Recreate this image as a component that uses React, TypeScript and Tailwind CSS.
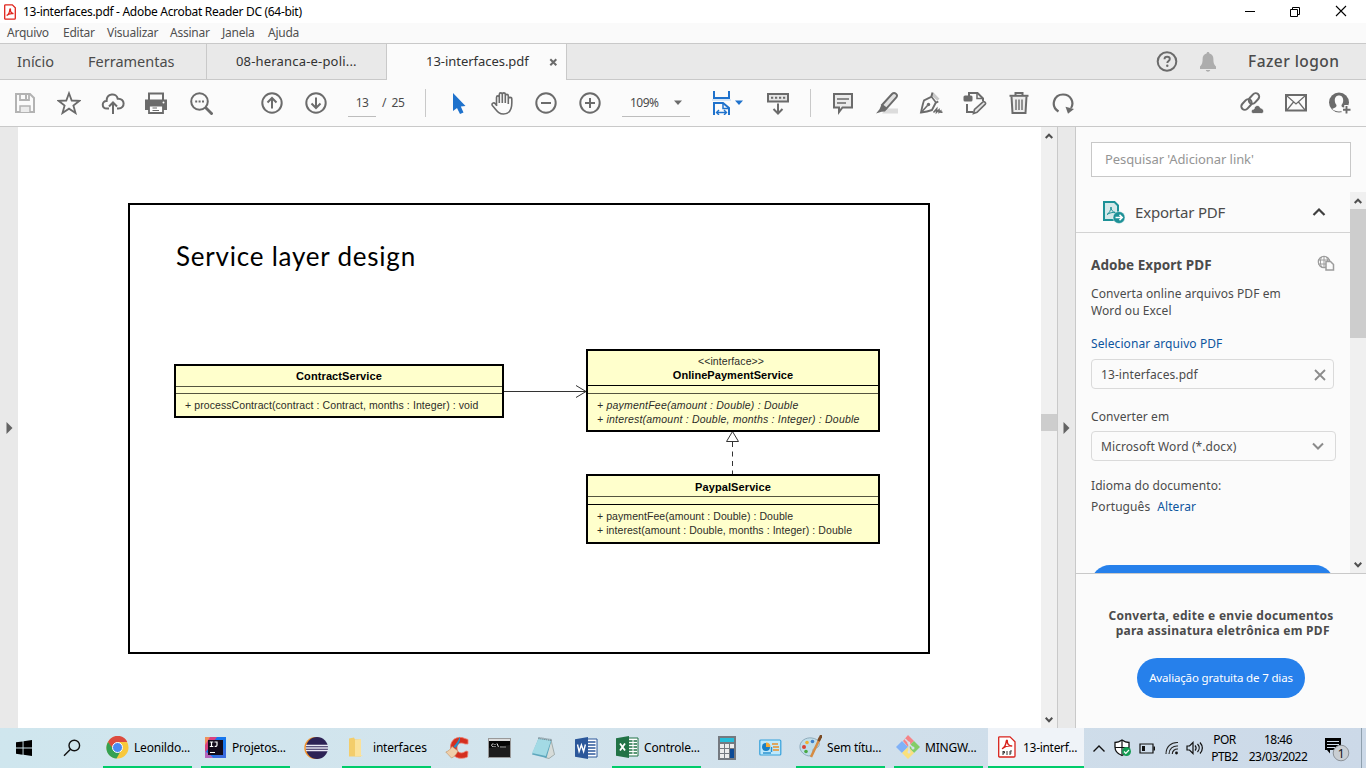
import React from "react";

type IconProps = { children: React.ReactNode; className?: string; size?: number; w?: number; h?: number };

function Icon({ children, className = "", size = 24, w, h }: IconProps) {
  const width = w ?? size;
  const height = h ?? size;
  return (
    <svg
      width={width}
      height={height}
      viewBox={`0 0 ${width} ${height}`}
      fill="none"
      stroke="#6b6b6b"
      strokeWidth="2"
      className={`block shrink-0 ${className}`}
    >
      {children}
    </svg>
  );
}

function TitleBar() {
  return (
    <div className="flex h-[23px] items-center bg-white pl-1 text-black">
      <Icon w={12} h={16}>
        <path d="M1.500.8h6.800l3 3v10.400a1 1 0 0 1-1 1H1.500a.8.8 0 0 1-.8-.8V1.600a.8.8 0 0 1 .8-.8z" stroke="#e0241c" strokeWidth="1.300" fill="#fff" />
        <path d="M2.700 11.500c1.500-.8 2.900-3.600 3.100-6 .1-1 .8-.9.7 0-.3 2.200 1 3.700 3 4.200-2.200-.3-5.300.2-6.800 1.800z" stroke="#e0241c" strokeWidth="1.200" />
      </Icon>
      <span className="ml-[7px] text-[12px] tracking-[-0.300px] whitespace-nowrap">13-interfaces.pdf - Adobe Acrobat Reader DC (64-bit)</span>
      <div className="ml-auto flex items-center">
        <Icon w={12} h={12} className="mr-[33px]"><path d="M1 5.500h10" stroke="#000" strokeWidth="1" /></Icon>
        <Icon w={12} h={12} className="mr-[34px]"><path d="M1.500 3.500h7v7h-7zM3.500 3.500v-2h7v7h-2" stroke="#000" strokeWidth="1" /></Icon>
        <Icon w={12} h={12} className="mr-[19px] mb-[2px]"><path d="M1 1l10 10M11 1L1 11" stroke="#000" strokeWidth="1.100" /></Icon>
      </div>
    </div>
  );
}

function MenuBar() {
  return (
    <div className="flex h-[21px] border-b border-[#c9c9c9] bg-[#fafafa] pl-[7px] text-[12px] leading-[20px] tracking-[-0.250px] text-[#505050]">
      <span className="w-[56px]">Arquivo</span>
      <span className="w-[44px]">Editar</span>
      <span className="w-[63px]">Visualizar</span>
      <span className="w-[52px]">Assinar</span>
      <span className="w-[46px]">Janela</span>
      <span>Ajuda</span>
    </div>
  );
}

function TabBar() {
  return (
    <div className="flex h-[36px] bg-[#e9e9e9] text-[#4b4b4b]">
      <div className="flex w-[207px] items-center border-r border-b border-[#c9c9c9] pl-[17px] text-[14.500px]">
        <span className="w-[71px]">Início</span>
        <span>Ferramentas</span>
      </div>
      <div className="flex w-[180px] items-center border-r border-b border-[#c9c9c9] pl-[29px] text-[13px] tracking-[0.180px] text-[#323232]">08-heranca-e-poli...</div>
      <div className="flex w-[180px] items-center border-r border-[#c9c9c9] bg-[#fbfbfb] pl-[39px] text-[13px] text-[#323232]">
        <span className="w-[123px] tracking-[-0.040px]">13-interfaces.pdf</span>
        <Icon w={9} h={9}><path d="M1.300 1.300l6 6M7.300 1.300l-6 6" strokeWidth="2" /></Icon>
      </div>
      <div className="flex flex-1 items-center border-b border-[#c9c9c9]">
        <div className="ml-auto flex items-center">
          <Icon size={22}>
            <circle cx="11" cy="10.500" r="9.300" />
            <path d="M8.500 8.200c0-3.300 5.300-3.100 5.300-.2 0 2-2.500 2-2.500 4" strokeWidth="1.900" />
            <circle cx="11.300" cy="14.800" r="1.200" fill="#6b6b6b" stroke="none" />
          </Icon>
          <Icon w={18} h={22} className="ml-[21px]">
            <path d="M9 1c.9 0 1.400.6 1.400 1.500 2.800.7 4 2.700 4 5.500 0 4 .6 5.500 2.600 7.500V18H1v-2.500C3 13.500 3.600 12 3.600 8c0-2.800 1.200-4.800 4-5.500C7.600 1.600 8.100 1 9 1zM6.800 19h4.400c-.5 2.300-3.900 2.300-4.400 0z" fill="#adadad" stroke="none" />
          </Icon>
          <span className="ml-[31px] w-[118px] text-[15.500px] font-medium tracking-[0.450px] whitespace-nowrap text-[#4b4b4b]">Fazer logon</span>
        </div>
      </div>
    </div>
  );
}

function Toolbar() {
  return (
    <div className="flex h-[47px] items-center border-b border-[#c9c9c9] bg-[#fbfbfb] pl-[13px] text-[12px] text-[#4b4b4b]">
      <div className="flex gap-5">
        <Icon>
          <path d="M3 3h14l4 4v14H3z" stroke="#b3b3b3" />
          <path d="M7 3v6h9V3" stroke="#b3b3b3" strokeWidth="1.800" />
          <path d="M12 4h2v4h-2z" fill="#b3b3b3" stroke="none" />
          <path d="M7 21v-6h10v6" stroke="#b3b3b3" strokeWidth="1.500" fill="#ececec" />
        </Icon>
        <Icon><path d="M12 2.300l2.700 7.200 7.700.3-6 4.800 2.100 7.400-6.500-4.300L5.500 22l2.100-7.400-6-4.800 7.700-.3z" strokeWidth="1.800" /></Icon>
        <Icon>
          <path d="M8 17.500H6C.3 17.500.5 9.800 5.600 10 5.600 2 15.600 1.700 16.700 7.700c7.700-.7 7.800 9.800.8 9.800H16" />
          <path d="M12 23V12M8 15.500l4-4 4 4" />
        </Icon>
        <Icon className="-ml-px mr-px">
          <path d="M5 9V2.500h14V9" />
          <path d="M1 8.500h22V19h-4v-4H5v4H1z" fill="#6b6b6b" stroke="none" />
          <path d="M5 14.500h14V22H5z" fill="#fff" strokeWidth="1.800" />
          <path d="M8.500 17h4.500M8.500 19.500H15" strokeWidth="1.200" />
          <circle cx="19.500" cy="11.500" r="1" fill="#fff" stroke="none" />
        </Icon>
        <Icon>
          <circle cx="10.500" cy="10.500" r="8.300" />
          <path d="M16.500 16.500l7 7" strokeWidth="2.800" />
          <path d="M6.200 10.500h2M9.600 10.500h2M13 10.500h2" strokeWidth="1.900" />
        </Icon>
      </div>
      <div className="ml-[47px] flex gap-5">
        <Icon><circle cx="12" cy="12" r="9.700" /><path d="M12 17.500V7M7.500 11.500L12 7l4.500 4.500" /></Icon>
        <Icon><circle cx="12" cy="12" r="9.700" /><path d="M12 6.500V17M7.500 12.500L12 17l4.500-4.500" /></Icon>
      </div>
      <div className="ml-5 flex h-[28px] w-[28px] items-center justify-center border-b border-[#bdbdbd] tracking-[-0.500px]">13</div>
      <span className="ml-[6px] w-[43px] tracking-[-0.400px] whitespace-pre">/  25</span>
      <div className="h-[28px] w-px bg-[#c9c9c9]" />
      <div className="ml-5 flex gap-5">
        <Icon><path d="M7 2v18l4-3 3 6 3.500-1.500-2.700-6L19.500 15z" fill="#1f72cc" stroke="none" /></Icon>
        <Icon>
          <path d="M6.500 15V6.500c0-2.200 2.800-2.200 2.800 0V12M9.300 6.500v-3c0-2.200 3-2.200 3 0V12M12.300 3.500c0-2.200 3-2.200 3 0V12M15.300 5c0-2.200 3-2.200 3 0v8M18.300 8c0-2.200 3.500-2.200 3.500 0 0 4 .4 6-.8 9.500-1.300 4-4 5.500-7.500 5.500-5.500 0-6.500-3.500-11.200-8.500-1-2.300 1.500-3.500 3-1.700l1.700 2" strokeWidth="1.600" />
        </Icon>
        <Icon><circle cx="12" cy="12" r="9.700" /><path d="M7 12h10" /></Icon>
        <Icon><circle cx="12" cy="12" r="9.700" /><path d="M7 12h10M12 7v10" /></Icon>
      </div>
      <div className="ml-5 flex h-[28px] w-[68px] items-center border-b border-[#bdbdbd] pl-2">
        <span className="w-[43px] tracking-[-0.500px]">109%</span>
        <Icon w={10} h={6}><path d="M1 .5h8L5 5z" fill="#6b6b6b" stroke="none" /></Icon>
      </div>
      <div className="ml-[22px] flex items-center">
        <Icon w={20} h={24}>
          <path d="M2 0v7h15V0" stroke="#1f72cc" />
          <path d="M0 9h19" stroke="#d5e6f7" />
          <path d="M2 24V12h9l6 5v7" stroke="#1f72cc" />
          <path d="M11 12v5.500h6" stroke="#1f72cc" strokeWidth="1.500" />
          <path d="M4.500 21.500h10M7 19l-2.500 2.500L7 24M12 19l2.500 2.500L12 24" stroke="#1f72cc" strokeWidth="1.400" />
        </Icon>
        <Icon w={8} h={6} className="ml-[3px]"><path d="M0 .5h8L4 5z" fill="#1f72cc" stroke="none" /></Icon>
      </div>
      <Icon className="ml-[23px]">
        <path d="M2 3h20v7.500H2z" fill="#e6e6e6" />
        <path d="M5 6.800h2.200M9 6.800h2.200M13 6.800h2.200M17 6.800h2.200" />
        <path d="M12 12.500V22M7.500 18l4.500 4.500 4.500-4.500" />
      </Icon>
      <div className="ml-5 h-[28px] w-px bg-[#c9c9c9]" />
      <div className="ml-5 flex gap-5">
        <Icon>
          <path d="M3 3h18v13.500h-9.500L8 21v-4.500H3z" fill="#ebebeb" />
          <path d="M6 8h12M6 12h9" strokeWidth="1.500" />
        </Icon>
        <Icon>
          <path d="M11 17.500h12v5H7z" fill="#dcdcdc" stroke="none" />
          <path d="M7 14L17 3c2.500-2.500 6.500.5 4.300 3.500L11.500 17.500z" fill="#e0e0e0" strokeWidth="1.900" />
          <path d="M6.500 13.500l5.500 4.500-2 2.500-3.500.3L1 22.500l3.500-4.300z" fill="#6b6b6b" stroke="none" />
        </Icon>
        <Icon>
          <path d="M14.500 1.500l6 6.300-2.200 2L12 4z" fill="#c9c9c9" stroke="none" />
          <path d="M13.500 1.500l-1.200 4.300L5 9.500C3.700 13 3 17 2 21.500c4-.5 7.500-1.200 11-2.500l3.700-7.200 2.600-1.300" strokeWidth="1.900" />
          <path d="M12.300 5.500l4.700 6M2.500 21l6-6.500" strokeWidth="1.600" />
          <circle cx="9.500" cy="13.500" r="1.700" fill="#6b6b6b" stroke="none" />
          <path d="M14.500 21.500l3.200-3.700-.2 3.500 2.500-2.500.1 2.500 1.700-1.300.2 1.300h1.500" strokeWidth="1.600" />
        </Icon>
        <Icon>
          <path d="M6 5V2h8.500l5.500 5.500V10" />
          <path d="M14 2v5.500h6" strokeWidth="1.500" />
          <rect x="0.500" y="4.500" width="9" height="6" rx="1.500" fill="#6b6b6b" stroke="none" />
          <path d="M4 13v8h6" />
          <path d="M10.500 22.500l1-4L20 10.800c1-.9 3.300 1 2.300 2.300L14 21.300z" fill="#e6e6e6" strokeWidth="1.600" />
        </Icon>
        <Icon>
          <path d="M4.500 5.500l1 16.500h13l1-16.500" fill="#ececec" strokeWidth="2" />
          <path d="M2.500 4.800h19" strokeWidth="2" />
          <path d="M8.500 4V2h7v2" strokeWidth="2" />
          <path d="M9 8.500v10.500M12 8.500v10.500M15 8.500v10.500" strokeWidth="1.400" />
        </Icon>
        <Icon>
          <path d="M7.500 20.500C-1 15 3 3.500 12 3.500c8 0 11.500 8 8 13.500" strokeWidth="2.200" />
          <path d="M14.500 15.800l8.500 2.200-6 4.800z" fill="#6b6b6b" stroke="none" />
        </Icon>
      </div>
      <div className="mr-[14px] ml-auto flex gap-5">
        <Icon>
          <rect x="10.500" y="1.500" width="7" height="12" rx="3.500" transform="rotate(42 14 7.500)" />
          <rect x="3" y="7.500" width="7" height="12" rx="3.500" transform="rotate(42 6.500 13.500)" />
          <path d="M13.500 22.500c-3 0-3-4 .5-4.500.8-4.500 5.500-4.500 6.500-1 4 .5 4 5.500 1 5.500z" fill="#6b6b6b" stroke="#fbfbfb" strokeWidth="0.800" />
        </Icon>
        <Icon><path d="M2 4h20v15.500H2z" /><path d="M2.500 4.500L12 13l9.500-8.500M3 19l6.500-8M21 19l-6.500-8" strokeWidth="1.200" /></Icon>
        <Icon>
          <circle cx="11" cy="11.500" r="10" fill="#6b6b6b" stroke="none" />
          <path d="M11 4.500c3 0 4.200 2.200 4.200 5 0 2.300-1 3.500-1.700 4.500-.3 2 1 2.500 4.500 4-3.500 3.300-10.500 3.300-14 0 3.500-1.500 4.800-2 4.500-4-.7-1-1.700-2.200-1.700-4.500 0-2.800 1.200-5 4.200-5z" fill="#fbfbfb" stroke="none" />
          <path d="M18.500 14v9.500M13.500 18.700h10" stroke="#fbfbfb" strokeWidth="4.500" />
          <path d="M18.500 15v7.500M15 18.700h7.500" strokeWidth="1.900" />
        </Icon>
      </div>
    </div>
  );
}

function Diagram() {
  return (
    <div className="relative h-full flex-1 bg-white font-['Liberation_Sans',sans-serif] text-[10.500px] leading-[14px] whitespace-nowrap text-[#2c2c28]">
      <div className="absolute top-[76px] left-[110px] h-[451px] w-[802px] border-2 border-black" />
      <div className="absolute top-[112px] left-[158px] font-['Lato',sans-serif] text-[26px] leading-[34px] tracking-[0.780px] text-black">Service layer design</div>
      <svg className="absolute top-0 left-0" width="1023" height="601" fill="none" stroke="#333" strokeWidth="1">
        <path d="M486 264.500h82M558 258.500l10 6-10 6" />
        <path d="M714.500 315v32" strokeDasharray="5 4.500" />
        <path d="M714.500 304.500l-6 10h12z" />
      </svg>
      <div className="absolute top-[237px] left-[156px] h-[54px] w-[330px] border-2 border-black bg-[#ffffcc]">
        <div className="h-[21px] border-b border-[#55553f] pt-[3px] text-center text-[11px] font-bold tracking-[0.100px] text-black">ContractService</div>
        <div className="h-[7px] border-b border-[#55553f]" />
        <div className="pt-[4px] pl-[9px] tracking-[0.085px]">+ processContract(contract : Contract, months : Integer) : void</div>
      </div>
      <div className="absolute top-[222px] left-[568px] h-[83px] w-[294px] border-2 border-black bg-[#ffffcc]">
        <div className="h-[35px] border-b border-black pt-[3px] text-center leading-[14px]">
          <div className="pr-1 tracking-[0.100px]">&lt;&lt;interface&gt;&gt;</div>
          <div className="text-[11px] font-bold tracking-[0.060px] text-black">OnlinePaymentService</div>
        </div>
        <div className="h-[8px] border-b border-[#55553f]" />
        <div className="pt-[4px] pl-[9px] tracking-[0.210px] italic">
          <div>+ paymentFee(amount : Double) : Double</div>
          <div>+ interest(amount : Double, months : Integer) : Double</div>
        </div>
      </div>
      <div className="absolute top-[347px] left-[568px] h-[70px] w-[294px] border-2 border-black bg-[#ffffcc]">
        <div className="h-[21px] border-b border-[#55553f] pt-[4px] text-center text-[11px] leading-[14px] font-bold tracking-[0.100px] text-black">PaypalService</div>
        <div className="h-[8px] border-b border-black" />
        <div className="pt-[4px] pl-[9px] tracking-[0.070px]">
          <div>+ paymentFee(amount : Double) : Double</div>
          <div>+ interest(amount : Double, months : Integer) : Double</div>
        </div>
      </div>
    </div>
  );
}

function Caret({ down = false }: { down?: boolean }) {
  return (
    <Icon w={8} h={6}>
      <path d={down ? "M.7.8L4 4.200 7.300.8" : "M.7 5L4 1.700 7.300 5"} stroke="#4f4f4f" strokeWidth="2" />
    </Icon>
  );
}

function SidePanel() {
  return (
    <div className="flex w-[291px] flex-col border-l border-[#c9c9c9] bg-[#fbfbfb] text-[12px] text-[#4b4b4b]">
      <div className="mt-[15px] ml-[15px] flex h-[35px] w-[260px] items-center border border-[#c8c8c8] bg-white pl-[13px] text-[13px] tracking-[-0.080px] text-[#959595]">Pesquisar 'Adicionar link'</div>
      <div className="mt-[15px] flex h-[381px]">
        <div className="w-[274px] overflow-hidden">
          <div className="flex h-[41px] items-center border-b border-[#d3d3d3] pl-[26px]">
            <Icon w={24} h={24}>
              <path d="M2 2h10.500L16 5.500V20H2z" fill="#d5e9ea" stroke="#1d9197" strokeWidth="2" />
              <path d="M5 14.500c2-1 4-4.500 4-7.500 0 3 1.500 5 4.500 5.500-3-.3-6 .3-8.500 2z" stroke="#1d9197" strokeWidth="1" />
              <circle cx="17" cy="17.500" r="6" fill="#1d9197" stroke="#fbfbfb" strokeWidth="0.500" />
              <path d="M13.500 17.500h6.500M17.500 14.800l2.700 2.700-2.700 2.700" stroke="#fff" strokeWidth="1.600" />
            </Icon>
            <span className="ml-[9px] text-[15px] tracking-[-0.200px]">Exportar PDF</span>
            <Icon w={14} h={10} className="mr-[24px] ml-auto"><path d="M1.500 8L7 2.500 12.500 8" stroke="#3f3f3f" strokeWidth="2.200" /></Icon>
          </div>
          <div className="pl-[15px] tracking-[0.080px]">
            <div className="flex h-[50px] items-center pt-[15px]">
              <span className="text-[13.500px] font-bold tracking-[0.050px]">Adobe Export PDF</span>
              <Icon w={18} h={16} className="mr-[15px] mb-1.5 ml-auto">
                <circle cx="7" cy="7" r="5.700" stroke="#9c9c9c" strokeWidth="1.200" />
                <path d="M1 5h12M1 9h8M7 1v12M4.500 2c-1.500 3-1.500 7 0 10M9.500 2c1.500 3 1.500 5 0 8" stroke="#9c9c9c" strokeWidth="1" />
                <path d="M9 6.500h4.500l3 3V15H9z" fill="#fbfbfb" stroke="#9c9c9c" strokeWidth="1.500" />
              </Icon>
            </div>
            <div className="mt-[2px] leading-[17px]">Converta online arquivos PDF em<br />Word ou Excel</div>
            <div className="mt-4 leading-[17px] text-[#0d559e]">Selecionar arquivo PDF</div>
            <div className="mt-[7px] flex h-[30px] w-[243px] items-center rounded border border-[#dadada] pt-px pl-[9px]">
              <span>13-interfaces.pdf</span>
              <Icon w={14} h={14} className="mr-[6px] ml-auto"><path d="M2 2l10 10M12 2L2 12" stroke="#8b8b8b" strokeWidth="1.800" /></Icon>
            </div>
            <div className="mt-[19px] leading-[17px]">Converter em</div>
            <div className="mt-[6px] flex h-[30px] w-[245px] items-center rounded border border-[#dadada] pl-[9px]">
              <span className="pt-[2px]">Microsoft Word (*.docx)</span>
              <Icon w={12} h={8} className="mr-[11px] ml-auto"><path d="M1 1.500l5 5 5-5" stroke="#8b8b8b" strokeWidth="2" /></Icon>
            </div>
            <div className="mt-4 leading-[17px]">Idioma do documento:</div>
            <div className="mt-1 leading-[17px]">Português<span className="ml-[7px] text-[#0d559e]">Alterar</span></div>
            <div className="mt-[50px] h-[38px] w-[243px] rounded-[19px] bg-[#2680eb]" />
          </div>
        </div>
        <div className="flex w-4 flex-col items-center bg-[#f0f0f0] pt-[6px] pb-[5px]">
          <Caret />
          <div className="mt-[5px] h-[129px] w-full bg-[#cdcdcd]" />
          <div className="mt-auto"><Caret down /></div>
        </div>
      </div>
      <div className="flex flex-1 flex-col items-center border-t border-[#c9c9c9]">
        <div className="mt-[34px] text-center text-[12px] leading-[15px] font-bold tracking-[0.280px] whitespace-pre">{"Converta, edite e envie documentos\n para assinatura eletrônica em PDF"}</div>
        <div className="mt-[20px] flex h-10 w-[168px] items-center justify-center rounded-full bg-[#2680eb] text-[11.500px] tracking-[-0.150px] whitespace-nowrap text-white">Avaliação gratuita de 7 dias</div>
      </div>
    </div>
  );
}

function Task({ icon, label, width, pad }: { icon: React.ReactNode; label: string; width: string; pad: string }) {
  return (
    <div className={`flex h-10 items-center border-b-2 border-[#00cc6a] ${width} ${pad}`}>
      {icon}
      <span className="ml-[5px] pt-px whitespace-nowrap">{label}</span>
    </div>
  );
}

function Taskbar() {
  return (
    <div className="flex h-10 items-center bg-linear-to-r from-[#cfe6ee] via-[#d3e4ed] via-40% to-[#ccd9e8] text-[12px] tracking-[-0.200px] text-black">
      <Icon w={16} h={16} className="ml-4"><path d="M0 2.300L6.600 1.400v6.100H0zM7.500 1.200L16 0v7.500H7.500zM0 8.500h6.600v6.200L0 13.800zM7.500 8.500H16V16l-8.500-1.200z" fill="#000" stroke="none" /></Icon>
      <Icon w={18} h={18} className="ml-[31px]"><circle cx="11.300" cy="6.500" r="5.300" stroke="#111" strokeWidth="1.400" /><path d="M7.500 10.300L1 16.800" stroke="#111" strokeWidth="1.500" /></Icon>
      <div className="ml-[22px] flex">
        <Task width="w-[89px]" pad="pl-[3px]" label="Leonildo..." icon={
          <Icon size={23}>
            <circle cx="11.500" cy="11.500" r="11" fill="#f8c83c" stroke="none" />
            <path d="M2 6C6-2.500 18-2 21.300 6H11.500L7 14z" fill="#dc4b3f" stroke="none" />
            <path d="M2 6c-4.500 8 1 16 8.500 16.500l4.500-8-7.500-1z" fill="#35a152" stroke="none" />
            <circle cx="11.500" cy="11.500" r="5" fill="#4a8af4" stroke="#fff" strokeWidth="1" />
          </Icon>} />
      </div>
      <div className="ml-[9px]">
        <Task width="w-[89px]" pad="pl-[3px]" label="Projetos..." icon={
          <Icon size={23}>
            <path d="M1 1h21v21H1z" fill="#1676ed" stroke="none" />
            <path d="M1 1h12L1 17z" fill="#d94080" stroke="none" />
            <path d="M1 1h5L1 9z" fill="#ee8f5b" stroke="none" />
            <path d="M1 15l9 7H1z" fill="#b365bd" stroke="none" />
            <path d="M22 12v10H8z" fill="#3a6bdf" stroke="none" />
            <path d="M4 4h15v15H4z" fill="#130a1b" stroke="none" />
            <path d="M5.800 6h3.500M7.500 6v4.500M5.800 10.500h3.500M10.500 6H13v3c0 1.300-1 1.700-2.300 1.200M6 16.500h5" stroke="#fff" strokeWidth="1.200" />
          </Icon>} />
      </div>
      <Icon size={24} className="ml-[14px]">
        <circle cx="11.300" cy="12" r="11" fill="#f2922b" stroke="none" />
        <circle cx="13" cy="12" r="11" fill="#2c2255" stroke="none" />
        <path d="M2 9.500h22M1.700 12h22.500M2 14.500h22" stroke="#e9e9f5" strokeWidth="1.300" />
      </Icon>
      <div className="ml-[14px]">
        <Task width="w-[89px]" pad="pl-[6px]" label="interfaces" icon={
          <Icon w={20} h={22}><path d="M1 2.500l5-1 1 2h6v17H1z" fill="#f3cd6b" stroke="none" /><path d="M7 4l6-1v16l2 1-8 .5z" fill="#fbe29a" stroke="none" /></Icon>} />
      </div>
      <Icon size={24} className="ml-[14px]">
        <path d="M23 8V3.500l-3-1C12-1 5 4 5.500 12c.5 9 9 12.500 17 9l.5-5.500-2-.5c-4.500 3.500-9 2-9-3s4-6 8-4z" fill="#d42f1f" stroke="#ef8271" strokeWidth="0.800" />
        <path d="M14.500 1c2 3-1.500 8-4 11l-2-1.500C11 8 13.500 5 14.500 1z" fill="#2490c9" stroke="none" />
        <path d="M7 10.500l6 4.500c-2 4-4 6-6.500 7L.8 16c3-1 5-3 6.200-5.500z" fill="#efcfaa" stroke="#bf9063" strokeWidth="0.600" />
      </Icon>
      <Icon w={24} h={21} className="ml-[19px]">
        <rect x="0.500" y="0.500" width="22" height="19" fill="#050505" stroke="#999" strokeWidth="1" />
        <path d="M1 1h21v2H1z" fill="#dcdcdc" stroke="none" />
        <path d="M5.500 6C3 5.500 3 9 5.500 8.500M7 6v1M7 8v1M9 5.500l1.500 3.500M12 9h6" stroke="#eee" strokeWidth="1" />
        <path d="M1 10l21-3v12H1z" fill="#333" opacity=".5" stroke="none" />
      </Icon>
      <Icon size={24} className="ml-[19px]">
        <path d="M20 4l3.500 14.500-5.500 4-4-1z" fill="#d7dcd9" stroke="#7d8987" strokeWidth=".6" />
        <path d="M7.500 2.500l13 2-5 17.500L1 18.500z" fill="#5ea7bd" stroke="none" />
        <path d="M7.500 2.500l12.500 2L14.800 20 1 17z" fill="#a3dae5" stroke="none" />
        <path d="M7.500 2l13 2" stroke="#677a81" strokeDasharray="1 1" strokeWidth="2" />
      </Icon>
      <Icon size={24} className="ml-[19px]">
        <path d="M11 3h12v18H11z" fill="#fff" stroke="#2b579a" strokeWidth="1" />
        <path d="M14 6h7.500M14 9h7.500M14 12h7.500M14 15h7.500M14 18h7.500" stroke="#2b579a" strokeWidth="1.300" />
        <path d="M1 3.200L14 1v22L1 20.800z" fill="#2b579a" stroke="none" />
        <path d="M3.500 8.500l1.600 7 2.300-6.500 2.200 6.500 1.800-7" stroke="#fff" strokeWidth="1.400" />
      </Icon>
      <div className="ml-[14px]">
        <Task width="w-[89px]" pad="pl-[3px]" label="Controle..." icon={
          <Icon size={24}>
            <path d="M11 3h12v18H11z" fill="#fff" stroke="#217346" strokeWidth="1" />
            <path d="M14 6h3.500M18.500 6H22M14 9h3.500M18.500 9H22M14 12h3.500M18.500 12H22M14 15h3.500M18.500 15H22M14 18h3.500M18.500 18H22" stroke="#217346" strokeWidth="1.700" />
            <path d="M1 3.200L14 1v22L1 20.800z" fill="#217346" stroke="none" />
            <path d="M5 8.500l5 7M10 8.500l-5 7" stroke="#fff" strokeWidth="1.800" />
          </Icon>} />
      </div>
      <Icon w={18} h={24} className="ml-[17px]">
        <path d="M0 0h18v24H0z" fill="#747980" stroke="none" />
        <path d="M2 2h14v4H2z" fill="#25bdd9" stroke="none" />
        <path d="M2 8h4v4H2zM7 8h4v4H7zM12 8h4v4h-4zM2 13h4v4H2zM7 13h4v4H7zM2 18h4v4H2zM7 18h4v4H7z" fill="#ececec" stroke="none" />
        <path d="M12 13h4v9h-4z" fill="#0b4a96" stroke="none" />
      </Icon>
      <Icon w={23} h={18} className="ml-[23px]">
        <rect x="0.800" y="1" width="21" height="15" rx="1" fill="#bee8fb" stroke="#35a1db" strokeWidth="1.200" />
        <circle cx="7" cy="8" r="4" fill="#187fc4" stroke="none" />
        <path d="M7 8V3.500A4.500 4.500 0 0 1 11.500 8z" fill="#f6aa35" stroke="none" />
        <path d="M13 5h6M14 8h6M14 11h6" stroke="#e98f2b" strokeWidth="1.700" />
        <path d="M12.500 8v5M4 14h8" stroke="#2c92cf" strokeWidth="1.500" />
      </Icon>
      <div className="ml-[14px]">
        <Task width="w-[89px]" pad="pl-[2px]" label="Sem títu..." icon={
          <Icon size={24}>
            <path d="M2 13C1 6 8 2 14 3c7 1 9 6 6 9-1.500 1.600-4 .5-5 2.500-.8 2 1 3.500-1 5.500C10 23 2.500 18 2 13z" fill="#bfdde9" stroke="#819eae" strokeWidth=".8" />
            <circle cx="6" cy="12" r="2" fill="#da4335" stroke="none" /><circle cx="9" cy="7.500" r="1.800" fill="#f0b22e" stroke="none" />
            <circle cx="8" cy="16.500" r="1.800" fill="#49a944" stroke="none" /><circle cx="14.500" cy="6.500" r="1.800" fill="#3d7ec8" stroke="none" />
            <path d="M22 3L13 22" stroke="#d68b42" strokeWidth="2.500" /><path d="M23.500 0l-3 6" stroke="#7a4a24" strokeWidth="2.800" />
          </Icon>} />
      </div>
      <div className="ml-[9px]">
        <Task width="w-[89px]" pad="pl-[2px]" label="MINGW..." icon={
          <Icon size={24}>
            <path d="M12 0l6 6-6 6-5-6z" fill="#f58387" stroke="none" /><path d="M18 6l6 6-6 6-6-6z" fill="#84cd67" stroke="none" />
            <path d="M6 6l6 6-6 6-6-6z" fill="#80b1f7" stroke="none" /><path d="M12 12l6 6-6 6-6-6z" fill="#fae07c" stroke="none" />
            <path d="M9 4l4 4v9M13 9l4 4" stroke="#d5e0ea" strokeWidth="1.500" />
            <circle cx="12.800" cy="8" r="1.500" fill="#d5e0ea" stroke="none" /><circle cx="17" cy="13" r="1.500" fill="#d5e0ea" stroke="none" /><circle cx="13" cy="17" r="1.500" fill="#d5e0ea" stroke="none" />
          </Icon>} />
      </div>
      <div className="ml-[5px] flex h-10 w-[96px] items-center border-b-2 border-[#00cc6a] bg-[#eff3f8] pl-[10px]">
        <Icon w={18} h={22}>
          <path d="M1.500.8H12l5 5V20a1 1 0 0 1-1 1H1.500a.8.8 0 0 1-.8-.8V1.600a.8.8 0 0 1 .8-.8z" fill="#fff" stroke="#d8231c" strokeWidth="1.300" />
          <path d="M4.500 12.500c1.600-1 3.500-4.500 3.800-7.500.1-1.200 1.100-1.200 1 0-.3 2.800 1.500 4.700 4.400 5-3-.4-6.700.5-9.200 2.500z" stroke="#d8231c" strokeWidth="1.400" strokeLinejoin="round" />
          <path d="M5 15v4M5 15.500h1.500v1.500H5M9 15v4M12 19v-4h2M12 17h1.500" stroke="#333" strokeWidth="1" />
        </Icon>
        <span className="ml-[7px] pt-px tracking-[-0.300px] whitespace-nowrap">13-interf...</span>
      </div>
      <Icon w={14} h={9} className="ml-2"><path d="M1.500 7.500L7 2l5.500 5.500" stroke="#111" strokeWidth="1.400" /></Icon>
      <Icon w={18} h={18} className="ml-2">
        <path d="M1 3.500c3 0 5-1 7-2.500 2 1.500 4 2.500 7 2.500V8c0 4-3 7-7 8.500C4 15 1 12 1 8z" fill="#fff" stroke="#111" strokeWidth="1.300" />
        <path d="M8 1v15M1 8.500h14" stroke="#111" strokeWidth="1.200" />
        <circle cx="12.500" cy="12.500" r="4.500" fill="#159b53" stroke="none" /><path d="M10 12.500l1.800 1.800 3.200-3.300" stroke="#fff" strokeWidth="1.200" />
      </Icon>
      <Icon w={17} h={11} className="ml-[7px]"><path d="M1 1h13v9H1z" stroke="#111" strokeWidth="1.200" /><path d="M3 3h3v5H3zM14.500 3.500H16v4h-1.500z" fill="#111" stroke="none" /></Icon>
      <Icon w={14} h={14} className="ml-[9px]">
        <path d="M1 13C1 6 6 1 13 1.500M4 13c0-5 4-8.500 9-8M7.300 13c0-3 2.500-5.300 5.700-5" stroke="#222" strokeWidth="1.100" />
        <circle cx="11.500" cy="12" r="1.400" fill="#111" stroke="none" />
      </Icon>
      <Icon w={18} h={14} className="ml-[7px]"><path d="M1 5h2.500L7 1.500v11L3.500 9H1zM9 4.500c1.300 1.500 1.300 3.500 0 5M11.500 3c2.200 2.300 2.200 5.700 0 8M14 1.500c3 3.500 3 7.500 0 11" stroke="#111" strokeWidth="1.200" /></Icon>
      <div className="ml-[6px] w-[29px] text-center leading-[17px] tracking-[-0.500px]">POR<br />PTB2</div>
      <div className="ml-[7px] w-[64px] text-center leading-[17px] tracking-[-0.530px] whitespace-nowrap">18:46<br />23/03/2022</div>
      <Icon w={26} h={28} className="ml-[14px]">
        <path d="M1 4h16v12H6v3.500L3 16H1z" fill="#000" stroke="none" />
        <path d="M3 7.500h12M3 10.500h12M3 13.500h8" stroke="#cfdbe8" strokeWidth="1" />
        <circle cx="17" cy="19" r="7.800" fill="#c9ced3" stroke="#8c9298" strokeWidth="1" />
        <text x="13.800" y="23.500" fill="#111" stroke="none" fontSize="12">1</text>
      </Icon>
      <div className="ml-auto h-10 w-[5px] border-l border-[#8fa0ae]" />
    </div>
  );
}

export default function App() {
  return (
    <div className="flex h-[768px] w-[1366px] flex-col overflow-hidden bg-white font-['Noto_Sans',sans-serif]">
      <TitleBar />
      <MenuBar />
      <TabBar />
      <Toolbar />
      <div className="flex h-[601px]">
        <div className="flex w-[18px] items-center bg-[#e9e9e9] pl-[6px]"><Icon w={7} h={12}><path d="M.5 0v12L6.500 6z" fill="#636363" stroke="none" /></Icon></div>
        <Diagram />
        <div className="flex w-4 flex-col items-center bg-[#f0f0f0] pt-[6px] pb-[5px]">
          <Caret />
          <div className="mt-[275px] h-[17px] w-full bg-[#cdcdcd]" />
          <div className="mt-auto"><Caret down /></div>
        </div>
        <div className="flex w-[18px] items-center border-l border-[#c9c9c9] bg-[#e9e9e9] pl-[5px]"><Icon w={7} h={12}><path d="M.5 0v12L6.500 6z" fill="#636363" stroke="none" /></Icon></div>
        <SidePanel />
      </div>
      <Taskbar />
    </div>
  );
}
